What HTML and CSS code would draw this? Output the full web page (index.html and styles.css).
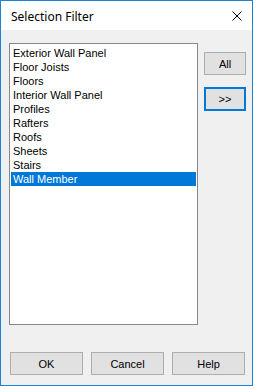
FILE: index.html
```html
<!DOCTYPE html>
<html lang="en">
<head>
  <meta charset="UTF-8" />
  <title>Selection Filter</title>
  <link rel="stylesheet" href="styles.css">
</head>
<body>

  <div class="window">
    <div class="title-bar">
      <span class="title">Selection Filter</span>
      <svg class="close" width="10" height="10" viewBox="0 0 10 10">
        <path d="M0.5 0.5 L9.5 9.5 M9.5 0.5 L0.5 9.5" stroke="#000" stroke-width="1" fill="none"/>
      </svg>
    </div>

    <div class="content">
      <div class="top-row">
        <ul class="listbox">
          <li>Exterior Wall Panel</li>
          <li>Floor Joists</li>
          <li>Floors</li>
          <li>Interior Wall Panel</li>
          <li>Profiles</li>
          <li>Rafters</li>
          <li>Roofs</li>
          <li>Sheets</li>
          <li>Stairs</li>
          <li class="selected">Wall Member</li>
        </ul>
        <div class="side-buttons">
          <button class="btn small">All</button>
          <button class="btn small focused">&gt;&gt;</button>
        </div>
      </div>

      <div class="bottom-row">
        <button class="btn wide">OK</button>
        <button class="btn wide">Cancel</button>
        <button class="btn wide">Help</button>
      </div>
    </div>
  </div>

</body>
</html>
```

FILE: styles.css
```css
body {
  margin: 0;
  background-color: white;
  font-family: "Liberation Sans", Arial, sans-serif;
  font-size: 11px;
  color: black;
}

.window {
  width: 251px;
  height: 384px;
  border: 1px solid #1883d7;
  background-color: #f0f0f0;
  display: flex;
  flex-direction: column;
}

.title-bar {
  height: 29px;
  background-color: white;
  display: flex;
  align-items: center;
  justify-content: space-between;
  padding: 0 10px 0 10px;
}

.title {
  font-family: "Noto Sans", sans-serif;
  font-size: 12px;
  padding-top: 1px;
}

.close {
  margin-top: 1px;
}

.content {
  flex: 1;
  padding: 13px 0 0 8px;
  display: flex;
  flex-direction: column;
}

.top-row {
  display: flex;
  gap: 6px;
}

.listbox {
  list-style: none;
  margin: 0;
  padding: 2px 1px;
  width: 185px;
  height: 276px;
  border: 1px solid #828790;
  background-color: white;
}

.listbox li {
  height: 14px;
  line-height: 14px;
  padding-left: 2px;
  white-space: nowrap;
}

.listbox li.selected {
  background-color: #0078d7;
  color: white;
}

.side-buttons {
  display: flex;
  flex-direction: column;
  gap: 12px;
  padding-top: 9px;
}

.btn {
  font-family: "Liberation Sans", Arial, sans-serif;
  font-size: 11px;
  color: black;
  background-color: #e1e1e1;
  border: 1px solid #adadad;
  height: 23px;
  padding: 0;
  margin: 0;
}

.btn.small {
  width: 42px;
}

.btn.focused {
  border: 2px solid #0078d7;
  height: 24px;
}

.bottom-row {
  display: flex;
  gap: 8px;
  margin-top: 27px;
  padding-left: 1px;
}

.btn.wide {
  width: 73px;
}
```
